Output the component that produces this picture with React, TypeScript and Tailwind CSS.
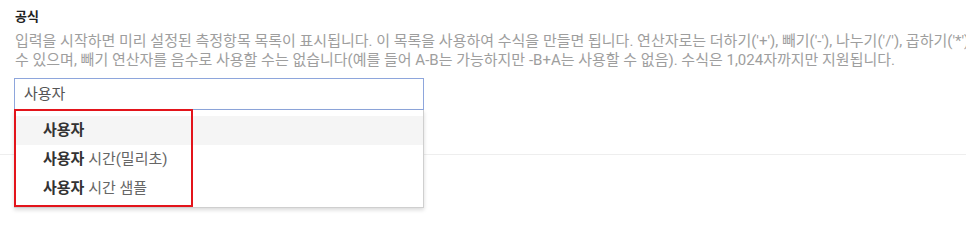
const items: { bold: string; rest: string }[] = [
  { bold: '사용자', rest: '' },
  { bold: '사용자', rest: ' 시간(밀리초)' },
  { bold: '사용자', rest: ' 시간 샘플' },
];

export default function App() {
  return (
    <div
      className="w-[966px] h-[230px] overflow-hidden bg-white"
      style={{ fontFamily: 'Roboto, "Noto Sans CJK KR", sans-serif' }}
    >
      <div className="pl-[15px] pt-[9px]">
        {/* Label */}
        <div className="text-[13px] font-bold leading-[16px] text-[#222]">공식</div>
        <div className="mt-[7px] text-[15px] leading-[19px] text-[#9e9e9e] whitespace-nowrap">
          <div>
            입력을 시작하면 미리 설정된 측정항목 목록이 표시됩니다. 이 목록을 사용하여 수식을 만들면 됩니다. 연산자로는 더하기('+'), 빼기('-'), 나누기('/'), 곱하기('*')를 사용할
          </div>
          <div>
            수 있으며, 빼기 연산자를 음수로 사용할 수는 없습니다(예를 들어 A-B는 가능하지만 -B+A는 사용할 수 없음). 수식은 1,024자까지만 지원됩니다.
          </div>
        </div>

        {/* Input with suggestions */}
        <div className="relative mt-[8px] w-[410px] -ml-px">
          <div className="h-[32px] border border-[#8ea6dc] flex items-center pl-[9px] text-[15px] text-[#555]">
            사용자
          </div>
          <div className="absolute left-0 top-full z-10 w-[410px] h-[98px] bg-white border border-t-0 border-[#cfcfcf] shadow-[0_2px_4px_rgba(0,0,0,0.15)] pt-[6px]">
            {items.map((it, i) => (
              <div
                key={i}
                className={`h-[29px] flex items-center pl-[28px] text-[15px] ${i === 0 ? 'bg-[#f5f5f5]' : ''}`}
              >
                <span className="font-bold text-[#333]">{it.bold}</span>
                <span className="text-[#666] whitespace-pre">{it.rest}</span>
              </div>
            ))}
            <div className="absolute -left-px -top-px w-[179px] h-[98px] border-2 border-[#e3141b]" />
          </div>
        </div>
      </div>

      {/* Divider behind dropdown */}
      <div className="mt-[44px] h-px bg-[#eeeeee]" />
    </div>
  );
}
